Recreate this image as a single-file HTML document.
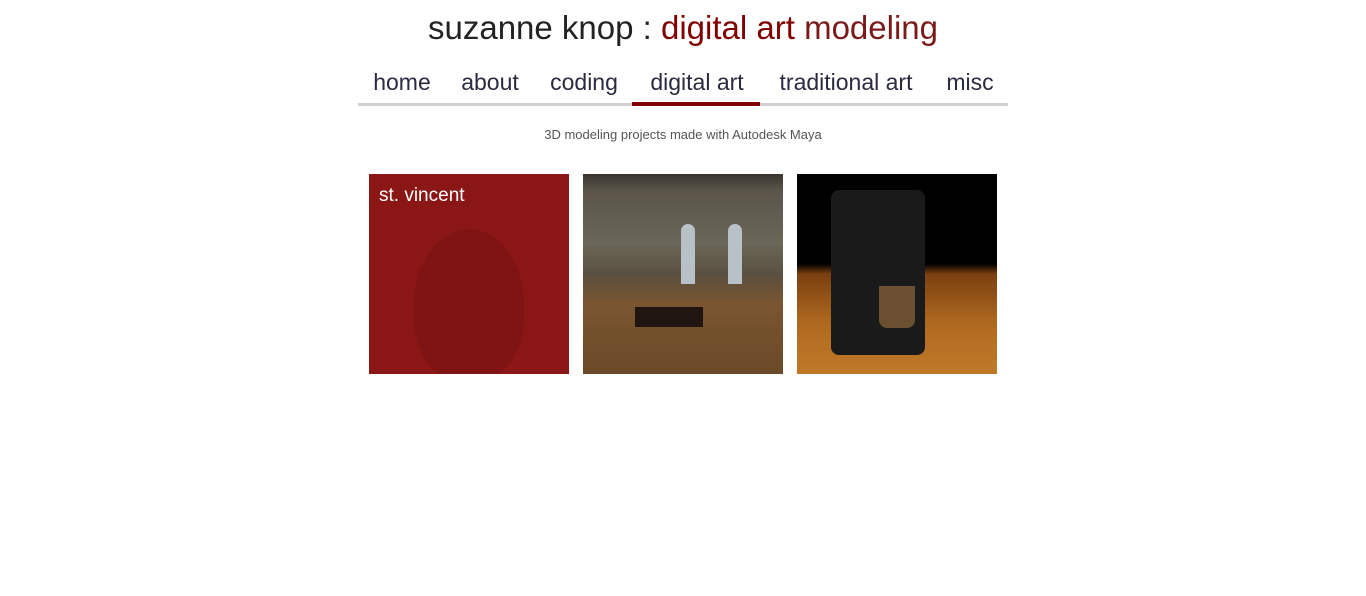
<!DOCTYPE html>
<html><head><meta charset="utf-8"><style>
body{margin:0;background:#fff;font-family:"Liberation Sans",sans-serif;width:1366px;height:596px;position:relative;overflow:hidden}
.t{position:absolute;left:0;width:1366px;top:9px;text-align:center;font-size:33px;color:#222;letter-spacing:0px}
.t .r{color:#800000}.t .m{color:#7a1a1a}
.n{position:absolute;top:69px;font-size:23px;color:#2a2a40;white-space:nowrap;transform:translateX(-50%)}
.line{position:absolute;left:358px;top:103px;width:650px;height:3px;background:#d0d0d0}
.act{position:absolute;left:632px;top:102px;width:128px;height:4px;background:#800000}
.s{position:absolute;top:127px;left:0;width:1366px;text-align:center;font-size:13px;color:#555}
.img{position:absolute;top:174px;width:200px;height:200px;overflow:hidden}
</style></head><body>
<div class="t">suzanne knop : <span class="r">digital art</span> <span class="m">modeling</span></div>
<div class="n" style="left:402px">home</div>
<div class="n" style="left:490px">about</div>
<div class="n" style="left:584px">coding</div>
<div class="n" style="left:697px">digital art</div>
<div class="n" style="left:846px">traditional art</div>
<div class="n" style="left:970px">misc</div>
<div class="line"></div><div class="act"></div>
<div class="s">3D modeling projects made with Autodesk Maya</div>
<div class="img" style="left:369px;background:#8a1616">
<div style="position:absolute;left:10px;top:11px;color:#fff;font-size:19px">st. vincent</div>
<div style="position:absolute;left:45px;top:55px;width:110px;height:150px;border-radius:50% 50% 40% 40%;background:rgba(90,10,10,0.2)"></div>
</div>
<div class="img" style="left:583px;background:linear-gradient(#3a3530 0%,#5a5548 8%,#6a6658 35%,#5a5040 50%,#7a5530 65%,#6a4a28 100%)">
<div style="position:absolute;left:98px;top:50px;width:14px;height:60px;background:#b8c0c8;border-radius:7px 7px 0 0"></div>
<div style="position:absolute;left:145px;top:50px;width:14px;height:60px;background:#b8c0c8;border-radius:7px 7px 0 0"></div>
<div style="position:absolute;left:52px;top:133px;width:68px;height:20px;background:#201510"></div>
</div>
<div class="img" style="left:797px;background:linear-gradient(#000 0%,#000 45%,#7a4010 50%,#b06a20 75%,#c07828 100%)">
<div style="position:absolute;left:34px;top:16px;width:94px;height:165px;background:#1a1a1a;border-radius:8px"></div>
<div style="position:absolute;left:82px;top:112px;width:36px;height:42px;background:#6a5030;border-radius:0 0 8px 8px"></div>
</div>
</body></html>
